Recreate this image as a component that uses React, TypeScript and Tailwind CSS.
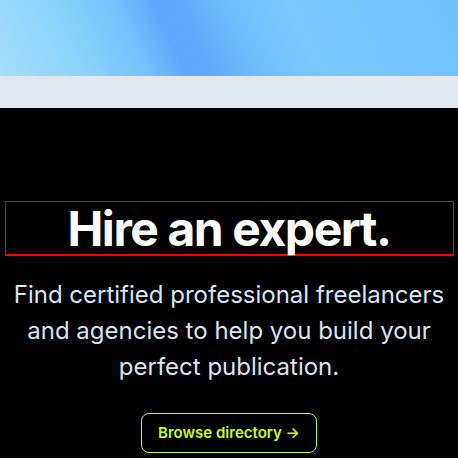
export default function App() {
  return (
    <div className="min-h-[458px] w-full bg-black" style={{ fontFamily: "Inter, 'Noto Sans', sans-serif" }}>
      <div className="h-[76px] w-full bg-[linear-gradient(65deg,#a3defa_0%,#8ad3fb_18%,#76c2fb_30%,#62a7fb_38%,#63aafc_44%,#6dbdfb_52%,#7ac8fc_65%,#73c4fb_85%,#6dc1fb_100%)]" />
      <div className="h-[32px] w-full bg-[#e2e8f0]" />
      <div className="flex flex-col items-center px-[5px] pt-[93px] pb-[5px]">
        <h1 className="w-[449px] border-x border-t border-b-2 border-[#ff0000] pt-[2px] text-center text-[48px] font-bold leading-[50px] tracking-[-0.03em] text-white">
          Hire an expert.
        </h1>
        <p className="mt-[21px] text-center text-[24px] leading-[36px] text-[#dbe4f0]">
          Find certified professional freelancers
          <br />
          and agencies to help you build your
          <br />
          perfect publication.
        </p>
        <button className="mt-[28px] flex h-[40px] w-[176px] items-center justify-center rounded-lg border border-[#ccff00] text-[15px] font-semibold text-[#ccff00]">
          Browse directory →
        </button>
      </div>
    </div>
  );
}
